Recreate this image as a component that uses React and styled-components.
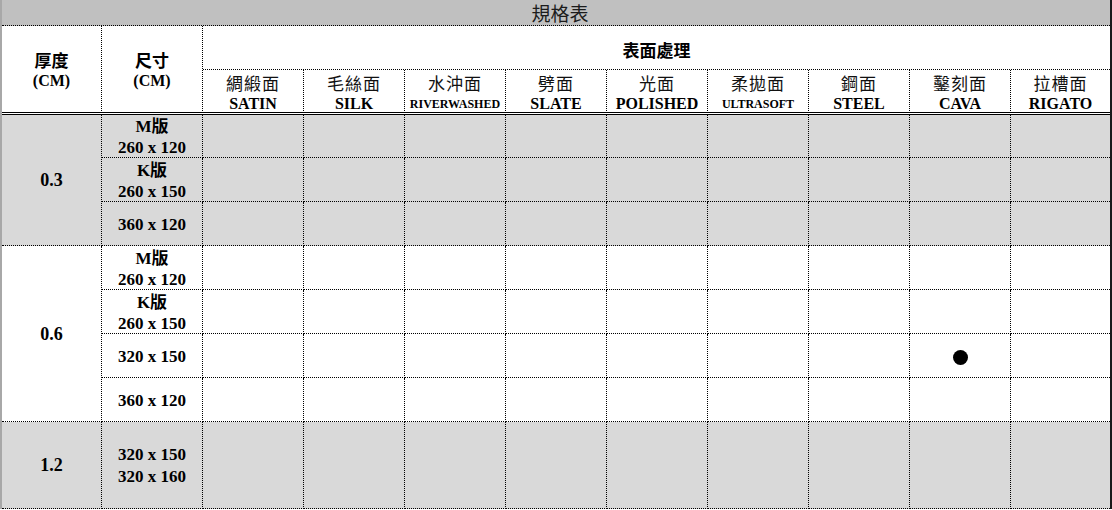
import React from "react";
import styled, { createGlobalStyle } from "styled-components";

const Global = createGlobalStyle`
  html, body { margin: 0; padding: 0; background: #fff; }
  body { font-family: "Liberation Serif", "Noto Sans CJK TC", serif; color: #000; }
`;

const SERIF = `"Liberation Serif", "Noto Sans CJK TC", serif`;
const CJK = `"Noto Sans CJK TC", "Noto Sans CJK SC", sans-serif`;

const Sheet = styled.div`
  display: grid;
  width: 1112px;
  box-sizing: border-box;
  border-left: 2px solid #a8a8a8;
  border-right: 2px solid #1a1a1a;
  grid-template-columns: 100px repeat(9, 101px) 99px;
  grid-template-rows: 26px 44px 45px 43px 44px 44px 44px 44px 44px 44px 87px;
`;

const TitleBar = styled.div`
  grid-column: 1 / -1;
  grid-row: 1;
  background: #c0c0c0;
  border-bottom: 1px dotted #000;
  display: flex;
  align-items: center;
  justify-content: center;
  font-family: ${CJK};
  font-size: 19px;
  line-height: 25px;
  color: #1c1c1c;
  padding-left: 8px;
`;

const Cell = styled.div`
  box-sizing: border-box;
  grid-column: ${(p) => p.$col} / span ${(p) => p.$cspan || 1};
  grid-row: ${(p) => p.$row} / span ${(p) => p.$rspan || 1};
  background: ${(p) => (p.$shade ? "#d9d9d9" : "#fff")};
  border-right: ${(p) => (p.$last ? "none" : "1px dotted #000")};
  border-bottom: ${(p) => (p.$double ? "3px double #000" : "1px dotted #000")};
  display: flex;
  flex-direction: column;
  align-items: center;
  justify-content: ${(p) => (p.$top ? "flex-start" : "center")};
  padding-top: ${(p) => p.$pt || 0}px;
`;

const HeadZh = styled.div`
  font-family: ${CJK};
  font-weight: 700;
  font-size: 17px;
  line-height: 21px;
`;

const HeadEn = styled.div`
  font-family: ${SERIF};
  font-weight: 700;
  font-size: 16px;
  line-height: 21px;
`;

const FinishZh = styled.div`
  font-family: ${CJK};
  font-weight: 400;
  font-size: 17px;
  line-height: 20px;
  letter-spacing: 1px;
  color: #111;
`;

const FinishEn = styled.div`
  font-family: ${SERIF};
  font-weight: 700;
  font-size: ${(p) => (p.$small ? 12 : 16)}px;
  line-height: 22px;
  white-space: nowrap;
`;

const SizeLine = styled.div`
  font-family: ${SERIF};
  font-weight: 700;
  font-size: 17px;
  line-height: ${(p) => p.$lh || 21}px;
  white-space: nowrap;
`;

const Thick = styled.div`
  font-family: ${SERIF};
  font-weight: 700;
  font-size: 18px;
  line-height: 22px;
`;

const Dot = styled.span`
  width: 15px;
  height: 15px;
  border-radius: 50%;
  background: #000;
  margin-top: 3px;
`;

const finishes = [
  { zh: "綢緞面", en: "SATIN" },
  { zh: "毛絲面", en: "SILK" },
  { zh: "水沖面", en: "RIVERWASHED", small: true },
  { zh: "劈面", en: "SLATE" },
  { zh: "光面", en: "POLISHED" },
  { zh: "柔拋面", en: "ULTRASOFT", small: true },
  { zh: "鋼面", en: "STEEL" },
  { zh: "鑿刻面", en: "CAVA" },
  { zh: "拉槽面", en: "RIGATO" },
];

const groups = [
  {
    thick: "0.3",
    shade: true,
    sizes: [["M版", "260 x 120"], ["K版", "260 x 150"], ["360 x 120"]],
  },
  {
    thick: "0.6",
    shade: false,
    sizes: [["M版", "260 x 120"], ["K版", "260 x 150"], ["320 x 150"], ["360 x 120"]],
  },
  {
    thick: "1.2",
    shade: true,
    sizes: [["320 x 150", "320 x 160"]],
    lh: 22,
  },
];

const marks = { "9-10": true };

export default function App() {
  let row = 4;
  const body = [];
  groups.forEach((g, gi) => {
    body.push(
      <Cell key={`t${gi}`} $col={1} $row={row} $rspan={g.sizes.length} $shade={g.shade}>
        <Thick>{g.thick}</Thick>
      </Cell>
    );
    g.sizes.forEach((lines, si) => {
      const r = row + si;
      body.push(
        <Cell key={`s${gi}-${si}`} $col={2} $row={r} $shade={g.shade} $pt={2}>
          {lines.map((l) => (
            <SizeLine key={l} $lh={g.lh}>{l}</SizeLine>
          ))}
        </Cell>
      );
      finishes.forEach((f, fi) => {
        const c = fi + 3;
        body.push(
          <Cell
            key={`c${gi}-${si}-${fi}`}
            $col={c}
            $row={r}
            $shade={g.shade}
            $last={c === 11}
          >
            {marks[`${r}-${c}`] && <Dot />}
          </Cell>
        );
      });
    });
    row += g.sizes.length;
  });

  return (
    <>
      <Global />
      <Sheet>
        <TitleBar>規格表</TitleBar>
        <Cell $col={1} $row={2} $rspan={2} $double $pt={1}>
          <HeadZh>厚度</HeadZh>
          <HeadEn>(CM)</HeadEn>
        </Cell>
        <Cell $col={2} $row={2} $rspan={2} $double $pt={1}>
          <HeadZh>尺寸</HeadZh>
          <HeadEn>(CM)</HeadEn>
        </Cell>
        <Cell $col={3} $cspan={9} $row={2} $last $pt={3}>
          <HeadZh>表面處理</HeadZh>
        </Cell>
        {finishes.map((f, i) => (
          <Cell key={f.en} $col={i + 3} $row={3} $double $last={i === 8} $top $pt={3}>
            <FinishZh>{f.zh}</FinishZh>
            <FinishEn $small={f.small}>{f.en}</FinishEn>
          </Cell>
        ))}
        {body}
      </Sheet>
    </>
  );
}
